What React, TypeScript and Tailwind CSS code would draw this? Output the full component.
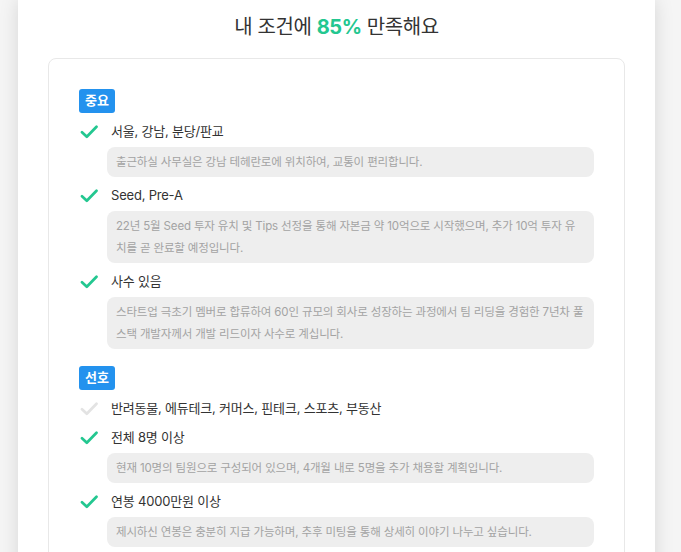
import React from 'react';

type Condition = {
  label: string;
  met: boolean;
  note?: string;
};

type Section = {
  tag: string;
  items: Condition[];
};

const sections: Section[] = [
  {
    tag: '중요',
    items: [
      {
        label: '서울, 강남, 분당/판교',
        met: true,
        note: '출근하실 사무실은 강남 테헤란로에 위치하여, 교통이 편리합니다.',
      },
      {
        label: 'Seed, Pre-A',
        met: true,
        note: '22년 5월 Seed 투자 유치 및 Tips 선정을 통해 자본금 약 10억으로 시작했으며, 추가 10억 투자 유치를 곧 완료할 예정입니다.',
      },
      {
        label: '사수 있음',
        met: true,
        note: '스타트업 극초기 멤버로 합류하여 60인 규모의 회사로 성장하는 과정에서 팀 리딩을 경험한 7년차 풀스택 개발자께서 개발 리드이자 사수로 계십니다.',
      },
    ],
  },
  {
    tag: '선호',
    items: [
      { label: '반려동물, 에듀테크, 커머스, 핀테크, 스포츠, 부동산', met: false },
      {
        label: '전체 8명 이상',
        met: true,
        note: '현재 10명의 팀원으로 구성되어 있으며, 4개월 내로 5명을 추가 채용할 계획입니다.',
      },
      {
        label: '연봉 4000만원 이상',
        met: true,
        note: '제시하신 연봉은 충분히 지급 가능하며, 추후 미팅을 통해 상세히 이야기 나누고 싶습니다.',
      },
    ],
  },
];

const CheckIcon = ({ met }: { met: boolean }) => (
  <svg
    width="18"
    height="14"
    viewBox="0 0 18 14"
    fill="none"
    className={met ? 'text-[#23c790]' : 'text-[#e3e3e3]'}
  >
    <path
      d="M2 7.2 L6.8 11.8 L16.5 1.8"
      stroke="currentColor"
      strokeWidth={2.7}
      strokeLinecap="round"
      strokeLinejoin="round"
    />
  </svg>
);

const ConditionRow = ({ item }: { item: Condition }) => (
  <div className="mt-[8px]">
    <div className="flex h-[21px] items-center">
      <div className="flex w-[32px] shrink-0 items-center pl-[1px]">
        <CheckIcon met={item.met} />
      </div>
      <span className="text-[13px] tracking-[-0.2px] text-[#333]">{item.label}</span>
    </div>
    {item.note && (
      <div className="ml-[28px] mt-[5px] rounded-[8px] bg-[#eeeeee] px-[9px] py-[4px] text-[11.5px] leading-[22px] tracking-[-0.15px] text-[#a3a3a3]">
        {item.note}
      </div>
    )}
  </div>
);

export default function App() {
  return (
    <div
      className="min-h-screen bg-[#f5f5f5]"
      style={{ fontFamily: 'Inter, "Noto Sans CJK KR", sans-serif' }}
    >
      <div className="ml-[18px] w-[637px] bg-white px-[30px] pb-[30px] pt-[13px] shadow-[0_0_18px_rgba(0,0,0,0.13)]">
        <h2 className="text-center text-[20px] leading-[28px] tracking-[-0.4px] text-[#333]">
          내 조건에 <span className="font-bold text-[#23c790]">85%</span> 만족해요
        </h2>

        <div className="mt-[17px] rounded-[8px] border border-[#e8e8e8] px-[30px] pb-[30px] pt-[30px]">
          {sections.map((section, i) => (
            <div key={section.tag} className={i > 0 ? 'mt-[17px]' : ''}>
              <div className="flex">
                <span className="flex h-[24px] w-[36px] items-center justify-center rounded-[3px] bg-[#2392ee] text-[13px] font-bold text-white">
                  {section.tag}
                </span>
              </div>
              {section.items.map((item) => (
                <ConditionRow key={item.label} item={item} />
              ))}
            </div>
          ))}
        </div>
      </div>
    </div>
  );
}
